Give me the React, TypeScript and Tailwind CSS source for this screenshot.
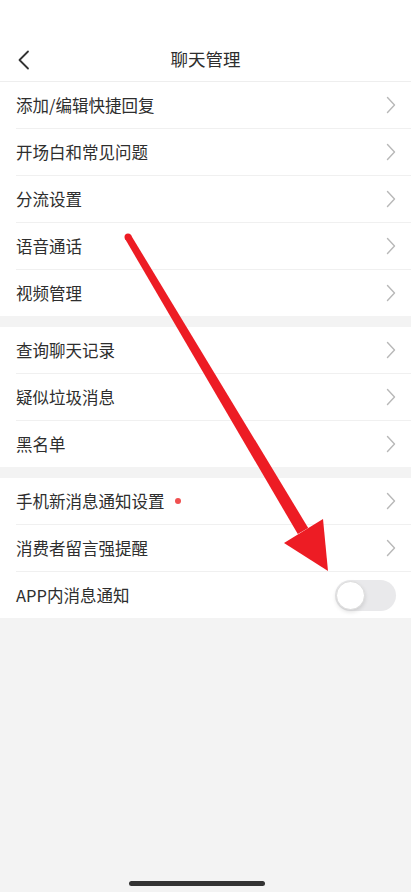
import { useState } from "react";

type Row = {
  label: string;
  dot?: boolean;
  toggle?: boolean;
};

const sections: Row[][] = [
  [
    { label: "添加/编辑快捷回复" },
    { label: "开场白和常见问题" },
    { label: "分流设置" },
    { label: "语音通话" },
    { label: "视频管理" },
  ],
  [{ label: "查询聊天记录" }, { label: "疑似垃圾消息" }, { label: "黑名单" }],
  [
    { label: "手机新消息通知设置", dot: true },
    { label: "消费者留言强提醒" },
    { label: "APP内消息通知", toggle: true },
  ],
];

function Chevron() {
  return (
    <svg width="10" height="18" viewBox="0 0 10 18" fill="none">
      <path d="M1.5 1.5 L8.5 9 L1.5 16.5" stroke="#b8b8b8" strokeWidth="1.4" strokeLinecap="round" strokeLinejoin="round" />
    </svg>
  );
}

function Toggle() {
  const [on, setOn] = useState(false);
  return (
    <button
      onClick={() => setOn(!on)}
      className={`relative w-[61px] h-[31px] rounded-full ${on ? "bg-[#34c759]" : "bg-[#e9e9eb]"}`}
    >
      <span
        className={`absolute top-[1px] w-[29px] h-[29px] rounded-full bg-white border border-[#dcdcdc] shadow-[0_2px_4px_rgba(0,0,0,0.12)] ${
          on ? "left-[31px]" : "left-[1px]"
        }`}
      />
    </button>
  );
}

export default function App() {
  return (
    <div
      className="relative w-[411px] h-[892px] bg-[#f3f3f3] overflow-hidden text-[#2e2e2e]"
      style={{ fontFamily: '"Noto Sans CJK SC", "Noto Sans", sans-serif' }}
    >
      {/* nav bar */}
      <div className="bg-white pt-[38px] border-b border-[#eeeeee]">
        <div className="relative h-[43px] flex items-center justify-center">
          <svg className="absolute left-[16px] top-[12px]" width="16" height="20" viewBox="0 0 16 20" fill="none">
            <path d="M12 1.5 L3.5 10 L12 18.5" stroke="#333" strokeWidth="1.8" strokeLinecap="round" strokeLinejoin="round" />
          </svg>
          <span className="text-[17.5px]">聊天管理</span>
        </div>
      </div>

      <div className="flex flex-col gap-[11px]">
        {sections.map((rows, i) => (
          <div key={i} className="bg-white">
            {rows.map((r, j) => (
              <div key={r.label} className="pl-[16px]">
                <div
                  className={`h-[46px] flex items-center pr-[15px] ${
                    j < rows.length - 1 ? "border-b border-[#f0f0f0] box-content" : ""
                  }`}
                >
                  <span className="text-[16.5px]">{r.label}</span>
                  {r.dot && <span className="ml-[10px] w-[6px] h-[6px] rounded-full bg-[#f05050]" />}
                  <div className="ml-auto flex items-center">{r.toggle ? <Toggle /> : <Chevron />}</div>
                </div>
              </div>
            ))}
          </div>
        ))}
      </div>

      {/* annotation arrow: tapered shaft plus head */}
      <svg className="absolute left-0 top-0 pointer-events-none" width="411" height="892">
        <circle cx="128" cy="237" r="3.5" fill="#ed1c24" />
        <polygon points="125,238.8 131,235.2 308.2,527.9 297.8,534.1" fill="#ed1c24" />
        <polygon points="328,571 284,543 323,519" fill="#ed1c24" />
      </svg>

      {/* home indicator */}
      <div className="absolute left-[129px] top-[881px] w-[136px] h-[5px] rounded-full bg-[#333333]" />
    </div>
  );
}
